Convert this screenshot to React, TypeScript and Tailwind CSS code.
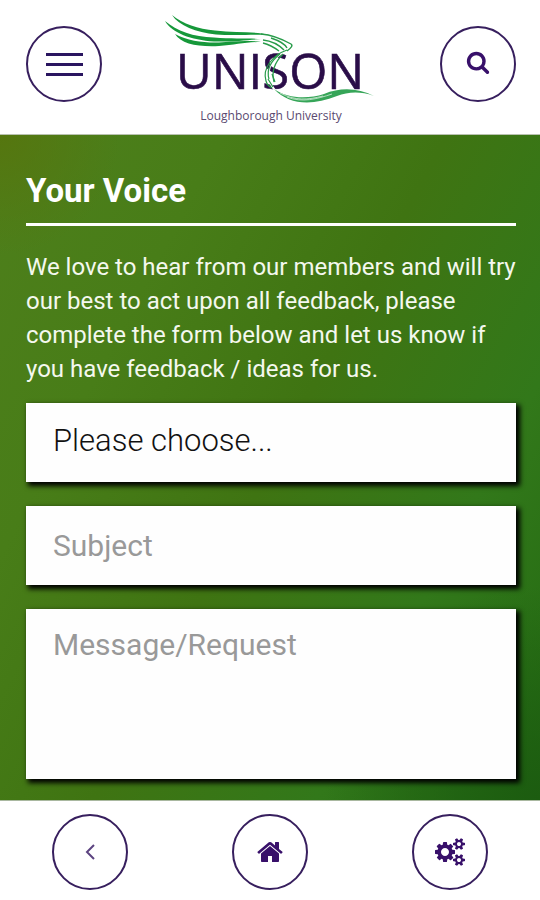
import React from 'react';

const circle =
  'flex size-19 shrink-0 items-center justify-center rounded-full border-2 border-[#371f5e] bg-white text-[#38106a]';

const field =
  'block w-full rounded-none border border-white bg-[#fefefe] px-[26px] leading-9 shadow-[3px_3px_5px_1px_#000000] outline-none placeholder:text-[#999999] placeholder:opacity-100';

const SearchIcon: React.FC = () => (
  <svg viewBox="0 0 1792 1792" className="size-6" fill="currentColor" aria-hidden="true">
    <path d="M1216 832q0-185-131.5-316.5t-316.5-131.5-316.5 131.5-131.5 316.5 131.5 316.5 316.5 131.5 316.5-131.5 131.5-316.5zm512 832q0 52-38 90t-90 38q-54 0-90-38l-343-342q-179 124-399 124-143 0-273.5-55.5t-225-150-150-225-55.5-273.5 55.5-273.5 150-225 225-150 273.5-55.5 273.5 55.5 225 150 150 225 55.5 273.5q0 220-124 399l343 343q37 37 37 90z" />
  </svg>
);

const HomeIcon: React.FC = () => (
  <svg viewBox="0 0 1792 1792" className="size-7" fill="currentColor" aria-hidden="true">
    <path d="M1472 992v480q0 26-19 45t-45 19h-384v-384h-256v384h-384q-26 0-45-19t-19-45v-480q0-1 .5-3t.5-3l575-474 575 474q1 2 1 6zm223-69l-62 74q-8 9-21 11h-3q-13 0-21-7l-692-577-692 577q-12 8-24 7-13-2-21-11l-62-74q-8-10-7-23.5t11-21.5l719-599q32-26 76-26t76 26l244 204v-195q0-14 9-23t23-9h192q14 0 23 9t9 23v408l219 182q10 8 11 21.5t-7 23.5z" />
  </svg>
);

const CogsIcon: React.FC = () => (
  <svg viewBox="0 0 1920 1792" className="h-7 w-[30px]" fill="currentColor" aria-hidden="true">
    <path d="M896 896q0-106-75-181t-181-75-181 75-75 181 75 181 181 75 181-75 75-181zm768 512q0-52-38-90t-90-38-90 38-38 90q0 53 37.5 90.5t90.5 37.5 90.5-37.5 37.5-90.5zm0-1024q0-52-38-90t-90-38-90 38-38 90q0 53 37.5 90.5t90.5 37.5 90.5-37.5 37.5-90.5zm-384 421v185q0 10-7 19.5t-16 10.5l-155 24q-11 35-32 76 34 48 90 115 7 11 7 20 0 12-7 19-23 30-82.5 89.5t-78.5 59.5q-11 0-21-7l-115-90q-37 19-77 31-11 108-23 155-7 24-30 24h-186q-11 0-20-7.5t-10-17.5l-23-153q-34-10-75-31l-118 89q-7 7-20 7-11 0-21-8-144-133-144-160 0-9 7-19 10-14 41-53t47-61q-23-44-35-82l-152-24q-10-1-17-9.5t-7-19.5v-185q0-10 7-19.5t16-10.5l155-24q11-35 32-76-34-48-90-115-7-11-7-20 0-12 7-20 22-30 82-89t79-59q11 0 21 7l115 90q34-18 77-32 11-108 23-154 7-24 30-24h186q11 0 20 7.5t10 17.5l23 153q34 10 75 31l118-89q8-7 20-7 11 0 21 8 144 133 144 160 0 8-7 19-12 16-42 54t-45 60q23 48 34 82l152 23q10 2 17 10.5t7 19.5zm640 533v140q0 16-149 31-12 27-30 52 51 113 51 138 0 4-4 7-122 71-124 71-8 0-46-47t-52-68q-20 2-30 2t-30-2q-14 21-52 68t-46 47q-2 0-124-71-4-3-4-7 0-25 51-138-18-25-30-52-149-15-149-31v-140q0-16 149-31 13-29 30-52-51-113-51-138 0-4 4-7 4-2 35-20t59-34 30-16q8 0 46 46.5t52 67.5q20-2 30-2t30 2q51-71 92-112l6-2q4 0 124 70 4 3 4 7 0 25-51 138 17 23 30 52 149 15 149 31zm0-1024v140q0 16-149 31-12 27-30 52 51 113 51 138 0 4-4 7-122 71-124 71-8 0-46-47t-52-68q-20 2-30 2t-30-2q-14 21-52 68t-46 47q-2 0-124-71-4-3-4-7 0-25 51-138-18-25-30-52-149-15-149-31v-140q0-16 149-31 13-29 30-52-51-113-51-138 0-4 4-7 4-2 35-20t59-34 30-16q8 0 46 46.5t52 67.5q20-2 30-2t30 2q51-71 92-112l6-2q4 0 124 70 4 3 4 7 0 25-51 138 17 23 30 52 149 15 149 31z" />
  </svg>
);

const Logo: React.FC = () => (
  <svg viewBox="0 0 216 94" className="h-[94px] w-[216px]" role="img" aria-label="UNISON">
    <text x="13" y="77" fontSize="49" fontFamily="'Open Sans', 'Noto Sans', sans-serif" fill="#2a0d48" stroke="#2a0d48" strokeWidth="0.6">
      UNISON
    </text>
    {/* ribbon: clears a gap through the S, then the strands */}
    <path d="M124 38C111 45 104 55 106 66C108 76 113 80 122 85" fill="none" stroke="#ffffff" strokeWidth="2" />
    <g fill="#16983a">
      <path d="M9 3C20 12 35 17 52 18.500C72 21 91 19 106 23C96 22 72 24 53 22.500C33 20 16 14 9 3Z" />
      <path d="M2 9C14 19 30 25 51 25.500C70 27 85 26 98 27C84 28 70 30 51 29.500C28 28 9 21 2 9Z" />
      <path d="M12 22C25 29 41 31 56 30.500C71 29 86 28 98 30C83 30 72 33 56 34C35 35 18 32 12 22Z" />
    </g>
    <g fill="none" stroke="#279b49" strokeWidth="1.400">
      <path d="M98 22C109 23 119 27 128 32Q131 34 124 39" />
      <path d="M100 28C109 29 116 33 121 38" />
      <path d="M100 31C108 33 112 36 116 39" />
      <path d="M108 26C117 29 122 32 124 36" />
    </g>
    <g fill="none" stroke="#279b49" strokeWidth="1.200">
      <path d="M124 38C110 43 99 56 103 69C104 73 107 75 109 76" />
      <path d="M117 42C108 49 103 57 106 67" />
      <path d="M120 42C112 50 108 59 111 70" />
      <path d="M109 62L112 70M105 67L110 75" />
    </g>
    <path d="M111 77C125 87 145 87 161 82C178 75 195 76 211 84C197 79 185 80 174 84C149 94 126 93 111 77Z" fill="#36a558" />
    <path d="M117 81C132 89 145 88 160 84M124 85C139 91 154 87 169 82" fill="none" stroke="#d3ecd9" strokeWidth="0.800" />
  </svg>
);

export default function App() {
  return (
    <div className="flex min-h-screen flex-col bg-white font-[Roboto,sans-serif]">
      <header className="flex items-start justify-between border-b border-[#b9c2b0] pr-6 pb-2 pl-[26px]">
        <button type="button" aria-label="Menu" className={`${circle} mt-[26px]`}>
          <span className="flex w-[37px] flex-col gap-[7px]">
            <span className="h-[3px] bg-[#2a1560]" />
            <span className="h-[3px] bg-[#2a1560]" />
            <span className="h-[3px] bg-[#2a1560]" />
          </span>
        </button>
        <a href="#" className="flex flex-col items-center pt-3">
          <Logo />
          <span className="font-['Open_Sans',sans-serif] text-xs leading-5 text-[#5a4a70]">Loughborough University</span>
        </a>
        <button type="button" aria-label="Search" className={`${circle} mt-[26px] pb-1`}>
          <SearchIcon />
        </button>
      </header>

      <main className="flex-1 bg-[radial-gradient(circle_at_0%_0%,#55760f_0%,transparent_14%),radial-gradient(circle_at_100%_100%,#1c5c10_0%,transparent_25%),linear-gradient(118deg,#4e7f1b_0%,#487d18_25%,#3f7412_50%,#32781a_75%,#236a12_100%)] pt-9 pr-6 pb-[21px] pl-[26px]">
        <h1 className="border-b-3 border-white pb-3 text-[33px] leading-10 font-bold text-white">Your Voice</h1>
        <p className="-mr-1 pt-6 pb-[17px] text-2xl leading-[34px] text-[#f4f8ee]">
          We love to hear from our members and will try our best to act upon all feedback, please complete the form below and let us know if you have feedback / ideas for us.
        </p>
        <form className="flex flex-col gap-6">
          <select aria-label="Category" className={`${field} h-[79px] appearance-none pb-1 text-[31px] font-light text-[#111111]`}>
            <option>Please choose...</option>
          </select>
          <input type="text" aria-label="Subject" placeholder="Subject" className={`${field} h-[79px] text-[30px]`} />
          <textarea aria-label="Message/Request" placeholder="Message/Request" className={`${field} h-[170px] resize-none pt-[17px] text-[30px]`} />
        </form>
      </main>

      <footer className="flex justify-around border-t border-[#a9b8a0] pt-[13px] pb-[10px]">
        <button type="button" aria-label="Back" className={circle}>
          <svg viewBox="0 0 10 16" className="h-4 w-[10px]" fill="none" stroke="#5c4380" strokeWidth="2" aria-hidden="true">
            <path d="M9 1L2 8L9 15" />
          </svg>
        </button>
        <button type="button" aria-label="Home" className={circle}>
          <HomeIcon />
        </button>
        <button type="button" aria-label="Settings" className={circle}>
          <CogsIcon />
        </button>
      </footer>
    </div>
  );
}
